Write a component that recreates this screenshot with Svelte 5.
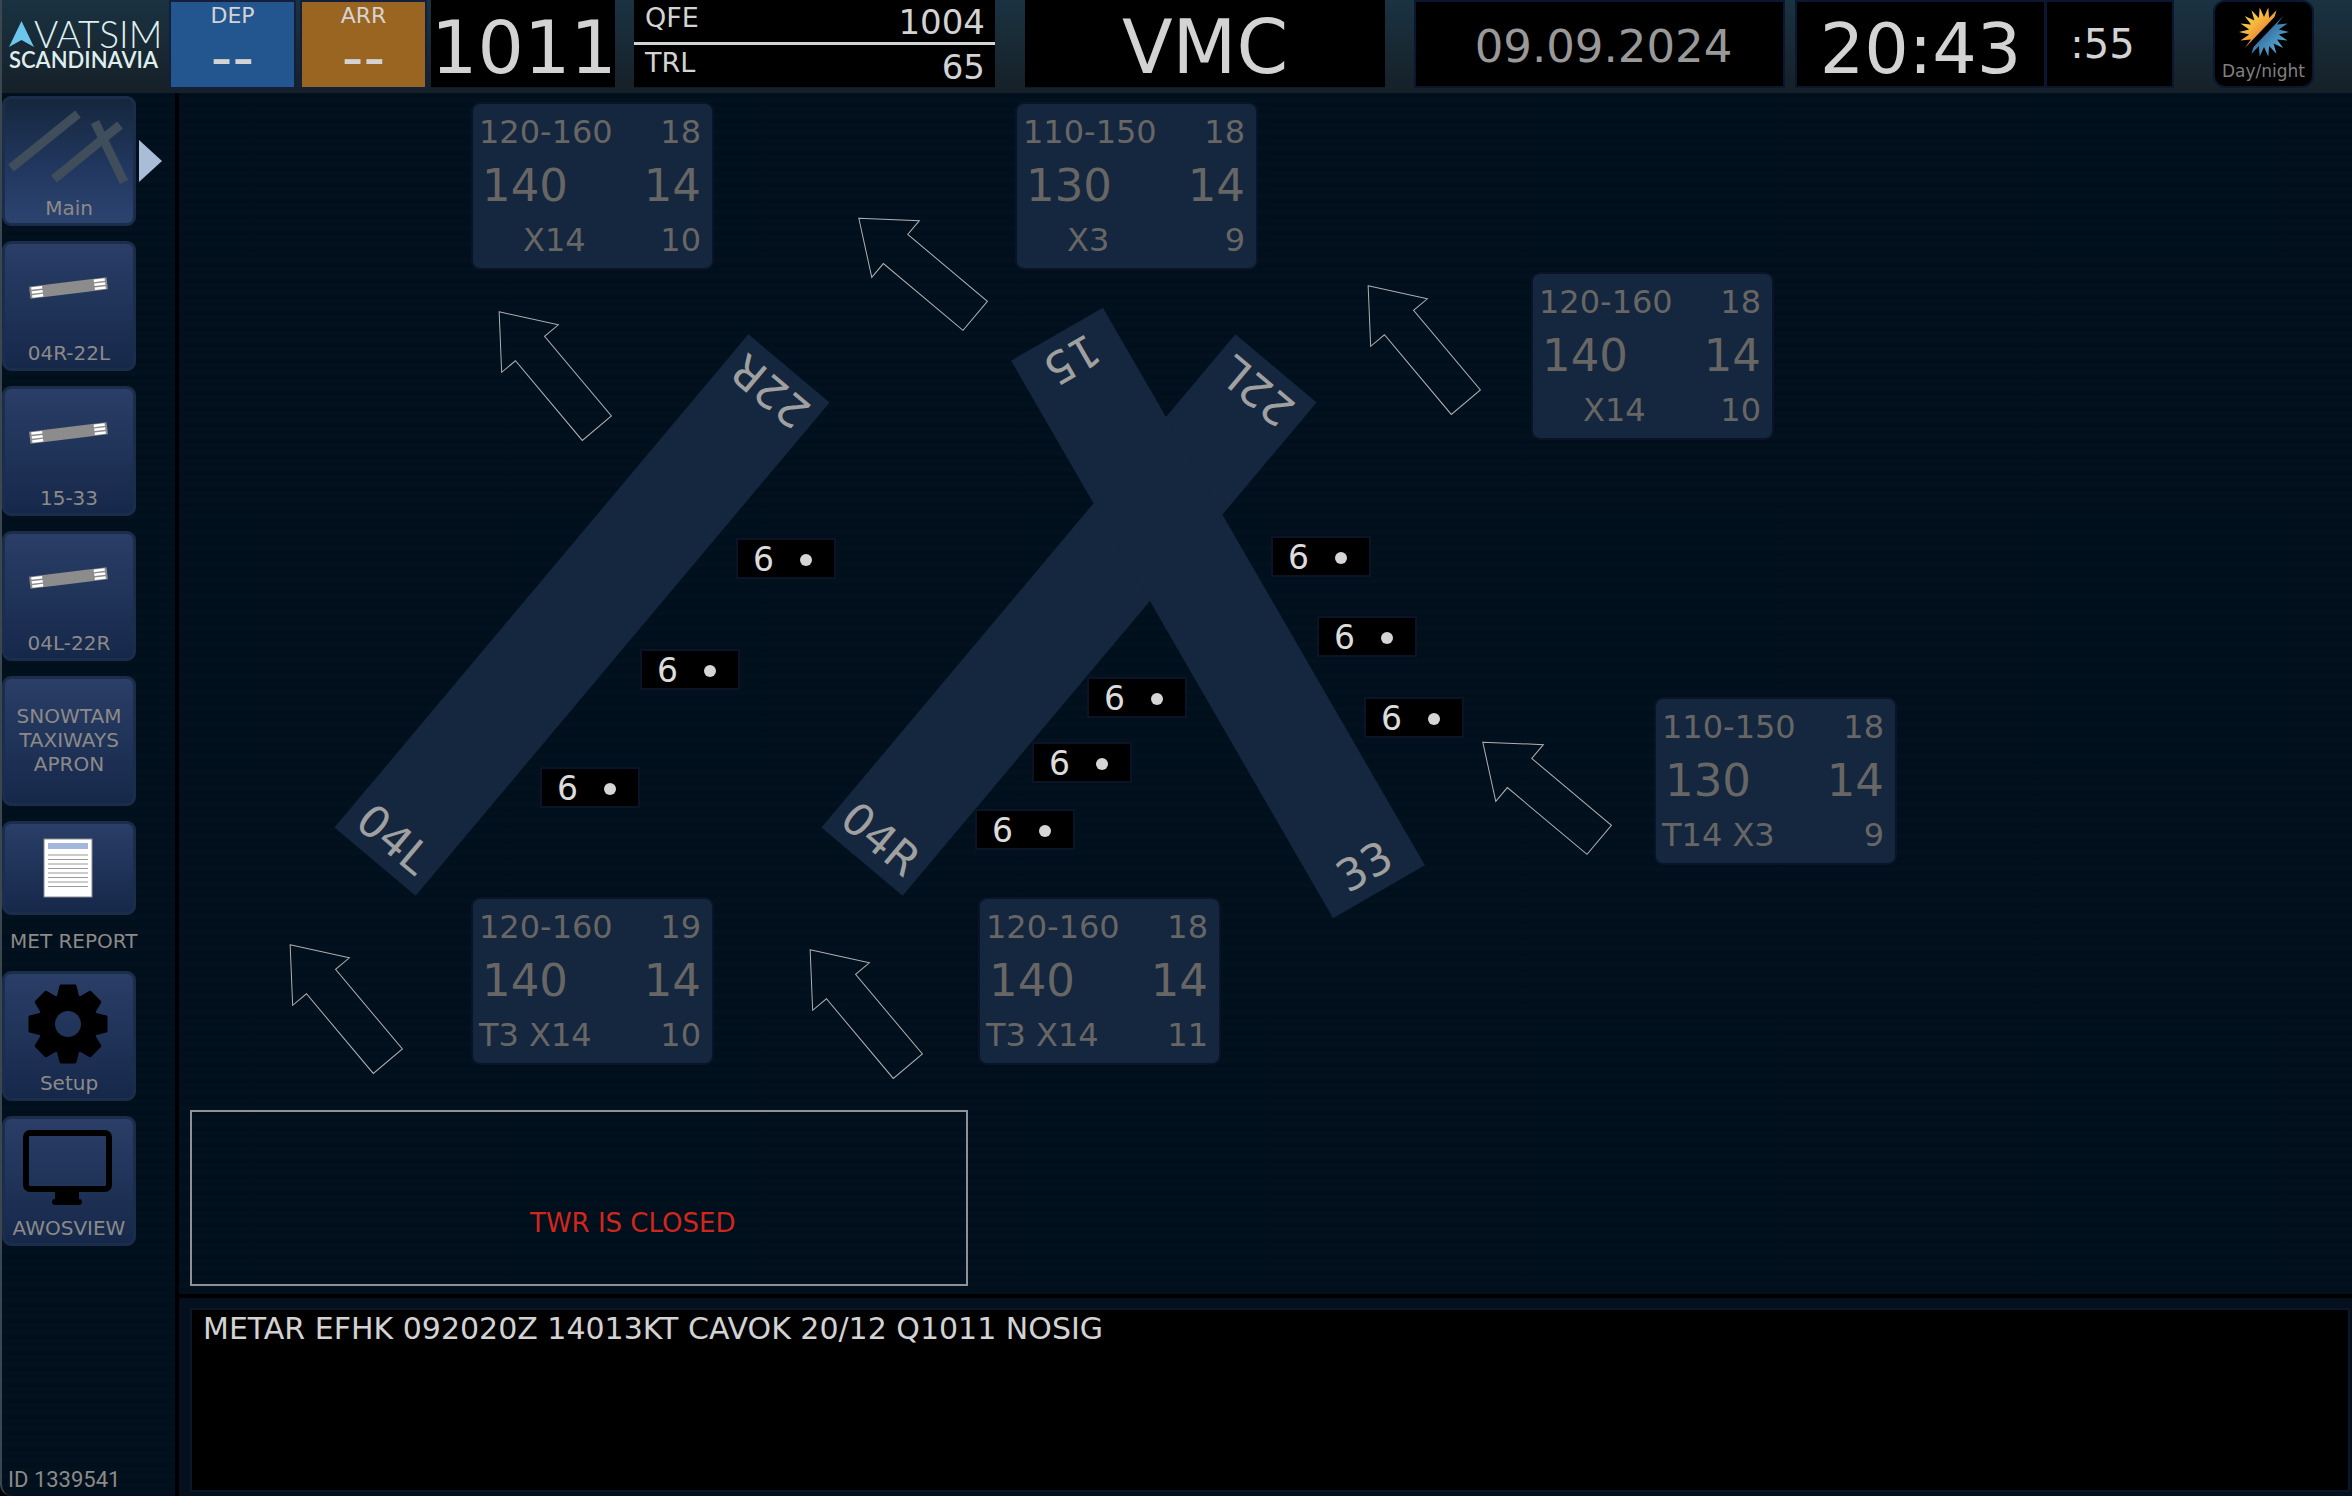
<script>
  const runwayPages = ['04R-22L', '15-33', '04L-22R'];

  // Runways on the airfield map: centre point, heading, labels at both ends.
  const runways = [
    { x: 403, y: 522, heading: 40, low: '04L', high: '22R' },
    { x: 890, y: 522, heading: 40, low: '04R', high: '22L' },
    { x: 1039, y: 520, heading: -30, low: '33', high: '15' }
  ];

  // Wind arrows: centre point and rotation from north.
  const arrows = [
    { x: 369, y: 277, turn: -40 },
    { x: 738, y: 174, turn: -50 },
    { x: 1238, y: 251, turn: -40 },
    { x: 1362, y: 698, turn: -50 },
    { x: 160, y: 910, turn: -40 },
    { x: 680, y: 915, turn: -40 }
  ];

  const winds = [
    { x: 294, y: 11, range: '120-160', max: 18, dir: 140, speed: 14, comp: 'X14', min: 10 },
    { x: 838, y: 11, range: '110-150', max: 18, dir: 130, speed: 14, comp: 'X3', min: 9 },
    { x: 1354, y: 181, range: '120-160', max: 18, dir: 140, speed: 14, comp: 'X14', min: 10 },
    { x: 1477, y: 606, range: '110-150', max: 18, dir: 130, speed: 14, comp: 'T14 X3', min: 9 },
    { x: 294, y: 806, range: '120-160', max: 19, dir: 140, speed: 14, comp: 'T3 X14', min: 10 },
    { x: 801, y: 806, range: '120-160', max: 18, dir: 140, speed: 14, comp: 'T3 X14', min: 11 }
  ];

  const conditions = [
    { x: 559, y: 447 },
    { x: 463, y: 558 },
    { x: 363, y: 676 },
    { x: 1094, y: 445 },
    { x: 1140, y: 525 },
    { x: 1187, y: 606 },
    { x: 910, y: 586 },
    { x: 855, y: 651 },
    { x: 798, y: 718 }
  ];

  const teeth = [0, 45, 90, 135, 180, 225, 270, 315];

  const burst = Array.from({ length: 36 }, (_, i) => {
    const angle = ((i * 10 + 10) * Math.PI) / 180;
    const radius = i % 2 === 0 ? 25 : 15;
    return `${(Math.sin(angle) * radius).toFixed(1)},${(-Math.cos(angle) * radius).toFixed(1)}`;
  }).join(' ');
</script>

<div class="app">
  <header>
    <div class="logo">
      <div class="brand">
        <svg width="25" height="26" viewBox="0 0 25 26" aria-hidden="true">
          <path d="M12.500 0 25 26 12.500 19 0 26Z" fill="#6cc5ea" />
        </svg>
        <span>VATSIM</span>
      </div>
      <div class="region">SCANDINAVIA</div>
    </div>
    <button class="atis dep"><span>DEP</span><b>--</b></button>
    <button class="atis arr"><span>ARR</span><b>--</b></button>
    <div class="box qnh">1011</div>
    <dl class="box levels">
      <div><dt>QFE</dt><dd>1004</dd></div>
      <div><dt>TRL</dt><dd>65</dd></div>
    </dl>
    <div class="box vmc">VMC</div>
    <div class="box date">09.09.2024</div>
    <div class="clock">
      <div class="box time">20:43</div>
      <div class="box seconds">:55</div>
    </div>
    <button class="daynight">
      <svg width="52" height="52" viewBox="-26 -26 52 52" aria-hidden="true">
        <defs>
          <linearGradient id="sun" x1="0" y1="0" x2="0.700" y2="0.700">
            <stop offset="0" stop-color="#f7ea3c" />
            <stop offset="0.450" stop-color="#f5b83f" />
            <stop offset="0.800" stop-color="#e8802f" />
          </linearGradient>
          <linearGradient id="moon" x1="0.400" y1="0.400" x2="0.900" y2="0.900">
            <stop offset="0" stop-color="#2c5f8e" />
            <stop offset="1" stop-color="#5db4e2" />
          </linearGradient>
          <clipPath id="upper"><path d="M-26-26H21L-22 19-26 23Z" /></clipPath>
          <clipPath id="lower"><path d="M26 26H-21L22-19 26-23Z" /></clipPath>
        </defs>
        <polygon points={burst} fill="url(#sun)" clip-path="url(#upper)" />
        <polygon points={burst} fill="url(#moon)" clip-path="url(#lower)" />
      </svg>
      <span>Day/night</span>
    </button>
  </header>

  <div class="body">
    <nav>
      <div class="current">
        <button class="tile active">
          <svg width="128" height="97" aria-hidden="true">
            <g stroke="#404e5b" stroke-width="9">
              <path d="M6 69 73 15M49 80 115 26M90 23 119 83" />
            </g>
          </svg>
          <span>Main</span>
        </button>
        <svg class="marker" width="23" height="42" aria-hidden="true">
          <path d="M0 0 23 21 0 42Z" fill="#a9bdd6" />
        </svg>
      </div>

      {#each runwayPages as page}
        <button class="tile">
          <svg width="128" height="97" aria-hidden="true">
            <g transform="translate(63.500 44) rotate(-7)">
              <rect x="-39" y="-6" width="78" height="12" fill="#8c8c8c" />
              <path
                d="M-37-4h11M-37 0h11M-37 4h11M26-4h11M26 0h11M26 4h11"
                stroke="#fff"
                stroke-width="2.600"
              />
            </g>
          </svg>
          <span>{page}</span>
        </button>
      {/each}

      <button class="tile snowtam"><span>SNOWTAM<br />TAXIWAYS<br />APRON</span></button>

      <div class="met">
        <button class="tile short" aria-labelledby="met-label">
          <svg width="128" height="88" aria-hidden="true">
            <rect x="39" y="15" width="48" height="58" fill="#fff" stroke="#8a8a8a" />
            <rect x="43" y="19" width="40" height="6" fill="#a3b7dc" />
            <path
              d="M43 31h40M43 35.500h40M43 40h40M43 44.500h40M43 49h40M43 53.500h40M43 58h40M43 62.500h40"
              stroke="#9a9a9a"
            />
          </svg>
        </button>
        <span id="met-label">MET REPORT</span>
      </div>

      <button class="tile">
        <svg width="128" height="97" aria-hidden="true">
          <g transform="translate(63 50)">
            <circle r="21.500" fill="none" stroke="#000" stroke-width="17" />
            {#each teeth as turn}
              <path
                d="M-7-38H7L10-26H-10Z"
                stroke="#000"
                stroke-width="3"
                stroke-linejoin="round"
                transform="rotate({turn})"
              />
            {/each}
          </g>
        </svg>
        <span>Setup</span>
      </button>

      <button class="tile">
        <svg width="128" height="97" aria-hidden="true">
          <rect x="21" y="14" width="83" height="56" rx="4" fill="none" stroke="#000" stroke-width="6" />
          <path d="M50 72H74V80Q77 80 77 83T74 86H50Q47 86 47 83T50 80Z" />
        </svg>
        <span>AWOSVIEW</span>
      </button>

      <div class="client">ID 1339541</div>
    </nav>

    <main>
      <section class="map">
        <svg class="field" aria-label="Runway layout">
          {#each runways as runway}
            <g transform="translate({runway.x} {runway.y}) rotate({runway.heading})">
              <rect x="-53" y="-322" width="106" height="644" />
              <text y="308">{runway.low}</text>
              <text y="308" transform="rotate(180)">{runway.high}</text>
            </g>
          {/each}
          {#each arrows as arrow}
            <path
              class="arrow"
              d="M0-76 37-28H19V76H-19V-28H-37Z"
              transform="translate({arrow.x} {arrow.y}) rotate({arrow.turn})"
            />
          {/each}
        </svg>

        {#each winds as wind}
          <div class="wind" style="left: {wind.x}px; top: {wind.y}px">
            <div class="minor"><span>{wind.range}</span><span>{wind.max}</span></div>
            <div class="major"><span>{wind.dir}</span><span>{wind.speed}</span></div>
            <div class="minor">
              <span class:cross={wind.comp.startsWith('X')}>{wind.comp}</span><span>{wind.min}</span>
            </div>
          </div>
        {/each}

        {#each conditions as spot}
          <div class="condition" style="left: {spot.x}px; top: {spot.y}px">6<i></i></div>
        {/each}

        <div class="notice">TWR IS CLOSED</div>
      </section>

      <section class="report">
        <div class="metar">METAR EFHK 092020Z 14013KT CAVOK 20/12 Q1011 NOSIG</div>
      </section>
    </main>
  </div>
</div>

<style>
  :global(body) {
    margin: 0;
    background: #000;
  }

  .app {
    box-sizing: border-box;
    display: flex;
    flex-direction: column;
    min-height: 100vh;
    border-left: 2px solid #3a4750;
    border-bottom-left-radius: 12px;
    overflow: hidden;
    color: #d3d3d3;
    font-family: Verdana, 'DejaVu Sans', sans-serif;
    background: repeating-linear-gradient(#010f1d 0, #03121e 5px, #010f1d 9px, #02111e 13px, #010f1d 16px);
  }

  button {
    margin: 0;
    padding: 0;
    font: inherit;
    color: inherit;
    cursor: pointer;
  }

  header {
    display: flex;
    align-items: flex-start;
    height: 93px;
    background: linear-gradient(#1a3241, #162028);
  }

  .logo {
    flex: none;
    box-sizing: border-box;
    width: 167px;
    padding: 18px 0 0 7px;
    color: #dfeeee;
    font-family: Lato, sans-serif;
  }

  .brand {
    display: flex;
    align-items: center;
    height: 32px;
    font-size: 37px;
    font-weight: 300;
    line-height: 32px;
  }

  .brand svg {
    flex: none;
  }

  .region {
    font-size: 22px;
    font-weight: 600;
    line-height: 20px;
  }

  .atis {
    flex: none;
    box-sizing: border-box;
    display: flex;
    flex-direction: column;
    align-items: center;
    width: 127px;
    height: 89px;
    margin-right: 4px;
    border: 2px solid #131f3c;
  }

  .atis span {
    font-size: 22px;
    line-height: 28px;
  }

  .atis b {
    font-size: 60px;
    font-weight: 400;
    line-height: 54px;
  }

  .dep {
    background: #23558f;
  }

  .arr {
    background: #9a6421;
  }

  .box {
    box-sizing: border-box;
    height: 88px;
    border-bottom: 1px solid #0c1a26;
    background: #000;
    text-align: center;
    white-space: nowrap;
  }

  .qnh {
    flex: none;
    width: 184px;
    padding: 8px 4px 0 0;
    font-size: 73px;
    line-height: 79px;
  }

  .levels {
    flex: 1 1 361px;
    margin: 0 30px 0 19px;
  }

  .levels div {
    display: flex;
    justify-content: space-between;
    box-sizing: border-box;
    height: 42px;
    padding: 0 10px 0 11px;
  }

  .levels div:first-child {
    height: 45px;
    border-bottom: 3px solid #d3d3d3;
  }

  .levels dt {
    font-size: 27px;
    line-height: 36px;
  }

  .levels dd {
    margin: 0;
    font-size: 34px;
    line-height: 44px;
  }

  .vmc {
    flex: 1 1 360px;
    padding-top: 8px;
    font-size: 74px;
    line-height: 79px;
  }

  .date {
    flex: 1 1 371px;
    margin: 0 10px 0 29px;
    padding-left: 8px;
    border: 2px solid #0a1730;
    color: #999;
    font-size: 45px;
    line-height: 90px;
  }

  .clock {
    flex: 1 1 379px;
    display: flex;
  }

  .clock .box {
    border: 2px solid #0a1730;
  }

  .time {
    flex: 2 1 251px;
    font-size: 70px;
    line-height: 94px;
  }

  .clock .seconds {
    flex: 1 1 128px;
    padding-right: 14px;
    border-left-width: 1px;
    font-size: 40px;
    line-height: 84px;
  }

  .daynight {
    flex: none;
    box-sizing: border-box;
    display: flex;
    flex-direction: column;
    align-items: center;
    width: 101px;
    height: 88px;
    margin: 0 38px 0 39px;
    padding-top: 4px;
    border: 2px solid #0a1730;
    border-radius: 12px;
    background: #000;
    color: #808080;
  }

  .daynight span {
    font-size: 17px;
    line-height: 26px;
  }

  .body {
    flex: 1;
    display: flex;
  }

  nav {
    flex: none;
    box-sizing: border-box;
    display: flex;
    flex-direction: column;
    gap: 15px;
    width: 173px;
    padding-top: 3px;
    color: #8c8a88;
    font-size: 20px;
    line-height: 24px;
  }

  .current {
    display: flex;
    align-items: center;
    gap: 3px;
  }

  .marker {
    flex: none;
  }

  .tile {
    flex: none;
    box-sizing: border-box;
    display: flex;
    flex-direction: column;
    align-items: center;
    width: 134px;
    height: 130px;
    border: 3px solid #1b2d4b;
    border-radius: 9px;
    background: linear-gradient(#2a3e67, #16284a);
  }

  .tile svg {
    flex: none;
    display: block;
  }

  .active {
    background: linear-gradient(#15273d, #22375f 55%, #2b446f);
  }

  .snowtam {
    padding-top: 25px;
  }

  .short {
    height: 94px;
  }

  .met {
    display: flex;
    flex-direction: column;
    height: 135px;
  }

  .met span {
    padding: 14px 0 0 8px;
    white-space: nowrap;
  }

  .client {
    margin-top: auto;
    padding: 0 0 4px 6px;
    font-family: Roboto, sans-serif;
    font-size: 22px;
  }

  main {
    flex: 1;
    display: flex;
    flex-direction: column;
    min-width: 0;
    border-left: 4px solid #000;
  }

  .map {
    flex: 1;
    box-sizing: border-box;
    position: relative;
    display: flex;
    flex-direction: column;
    justify-content: flex-end;
    align-items: flex-start;
    min-height: 1190px;
    padding: 0 0 8px 11px;
  }

  .field {
    position: absolute;
    inset: 0;
    width: 100%;
    height: 100%;
  }

  .field rect {
    fill: #14273f;
  }

  .field text {
    fill: #a0a0a0;
    font-size: 44px;
    text-anchor: middle;
  }

  .arrow {
    fill: none;
    stroke: #b0b0b0;
    stroke-width: 1px;
  }

  .wind {
    position: absolute;
    box-sizing: border-box;
    width: 239px;
    height: 164px;
    padding-top: 8px;
    border-radius: 7px;
    background: #14273f;
    box-shadow: 0 0 0 2px #0a1426;
    color: #686664;
  }

  .wind div {
    display: flex;
    justify-content: space-between;
    white-space: nowrap;
  }

  .minor {
    padding: 0 11px 0 6px;
    font-size: 32px;
    line-height: 40px;
  }

  .major {
    padding: 0 11px 0 9px;
    font-size: 45px;
    line-height: 68px;
  }

  .cross {
    padding-left: 44px;
  }

  .condition {
    position: absolute;
    box-sizing: border-box;
    display: flex;
    align-items: center;
    gap: 26px;
    width: 96px;
    height: 37px;
    padding: 2px 0 0 15px;
    background: #000;
    box-shadow: 0 0 0 2px #0a1426;
    color: #dcdcdc;
    font-size: 33px;
    line-height: 35px;
  }

  .condition i {
    width: 12px;
    height: 12px;
    border-radius: 50%;
    background: #d6d6d6;
  }

  .notice {
    box-sizing: border-box;
    width: 778px;
    height: 176px;
    padding: 96px 0 0 338px;
    border: 2px solid #8f9294;
    color: #d0261c;
    font-size: 26px;
    line-height: 30px;
  }

  .report {
    display: flex;
    box-sizing: border-box;
    height: 202px;
    padding: 10px 2px 4px 11px;
    border-top: 4px solid #000;
    background: #04101e;
  }

  .metar {
    flex: 1;
    box-sizing: border-box;
    padding: 0 11px;
    border: 2px solid #0a1728;
    background: #000;
    font-size: 30px;
    line-height: 38px;
  }
</style>
